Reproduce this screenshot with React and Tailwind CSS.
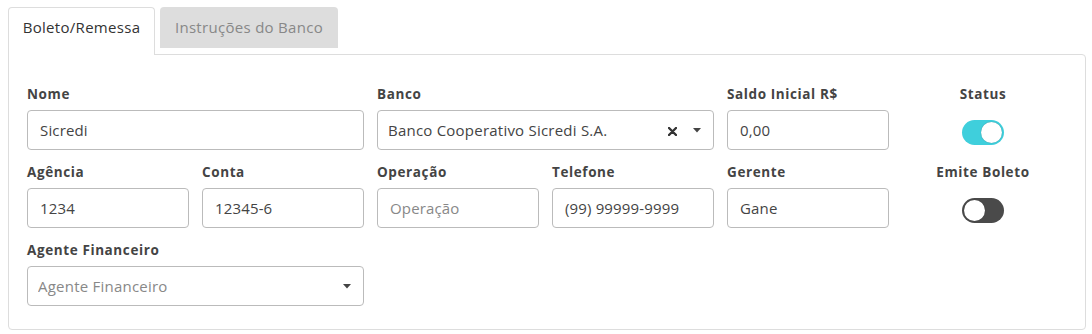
import { useState } from "react";

const FONT = { fontFamily: '"Open Sans", "Liberation Sans", sans-serif' };

function Label({ children, className = "" }) {
  return (
    <div className={"h-5 mb-1.5 text-[13.5px] leading-5 font-bold tracking-[0.045em] text-[#444] whitespace-nowrap " + className}>
      {children}
    </div>
  );
}

function Field({ label, value, placeholder, span = "col-span-1" }) {
  return (
    <div className={span}>
      <Label>{label}</Label>
      <input
        className="w-full h-10 rounded border border-[#bbb] bg-white px-3 text-[15px] tracking-[0.01em] text-[#444] placeholder:text-[#888] outline-none"
        defaultValue={value}
        placeholder={placeholder}
      />
    </div>
  );
}

function Caret() {
  return (
    <svg width="8" height="5" viewBox="0 0 8 5" className="shrink-0">
      <path d="M0 0 L8 0 L4 4.5 Z" fill="#444" />
    </svg>
  );
}

function SelectBox({ label, value, placeholder, clearable, span }) {
  return (
    <div className={span}>
      <Label>{label}</Label>
      <div className="flex h-10 items-center rounded border border-[#bbb] bg-white pl-[10px] pr-3">
        <span className={"flex-1 truncate text-[15px] tracking-[0.015em] " + (value ? "text-[#444]" : "text-[#888]")}>
          {value || placeholder}
        </span>
        {clearable && (
          <svg width="9" height="9" viewBox="0 0 9 9" className="mr-[16px] mt-0.5">
            <path d="M1 1 L8 8 M8 1 L1 8" stroke="#333" strokeWidth="2.4" strokeLinecap="round" />
          </svg>
        )}
        <Caret />
      </div>
    </div>
  );
}

function Toggle({ label, on }) {
  const [checked, setChecked] = useState(on);
  return (
    <div className="col-span-1 flex flex-col items-center">
      <Label>{label}</Label>
      <button
        onClick={() => setChecked(!checked)}
        className={
          "mt-[10px] flex h-[25px] w-[42px] items-center rounded-full px-[2px] " +
          (checked ? "justify-end bg-[#3fcfdc]" : "justify-start bg-[#4a4a4a]")
        }
      >
        <span className="h-[21px] w-[21px] rounded-full bg-white shadow-[0_0_1px_rgba(0,0,0,0.4)]" />
      </button>
    </div>
  );
}

export default function App() {
  return (
    <div className="min-h-screen bg-white pl-2 pr-[6px] pt-[7px]" style={FONT}>
      <div className="flex items-start">
        <div className="relative z-10 -mb-px h-[48px] w-[147px] rounded-t border border-b-0 border-[#ddd] bg-white text-center text-[15px] leading-[38px] tracking-[0.02em] text-[#333]">
          Boleto/Remessa
        </div>
        <div className="ml-[5px] h-[41px] w-[178px] rounded-t bg-[#dddddd] text-center text-[15px] leading-[40px] tracking-[0.02em] text-[#888]">
          Instruções do Banco
        </div>
      </div>
      <div className="h-[276px] rounded-b rounded-tr border border-[#ddd] pl-[18px] pt-[29px]">
        <div className="grid grid-cols-[repeat(6,162px)] gap-x-[13px] gap-y-[12px]">
          <Field label="Nome" value="Sicredi" span="col-span-2" />
          <SelectBox label="Banco" value="Banco Cooperativo Sicredi S.A." clearable span="col-span-2" />
          <Field label="Saldo Inicial R$" value="0,00" />
          <Toggle label="Status" on />

          <Field label="Agência" value="1234" />
          <Field label="Conta" value="12345-6" />
          <Field label="Operação" placeholder="Operação" />
          <Field label="Telefone" value="(99) 99999-9999" />
          <Field label="Gerente" value="Gane" />
          <Toggle label="Emite Boleto" on={false} />

          <SelectBox label="Agente Financeiro" placeholder="Agente Financeiro" span="col-span-2" />
        </div>
      </div>
    </div>
  );
}
